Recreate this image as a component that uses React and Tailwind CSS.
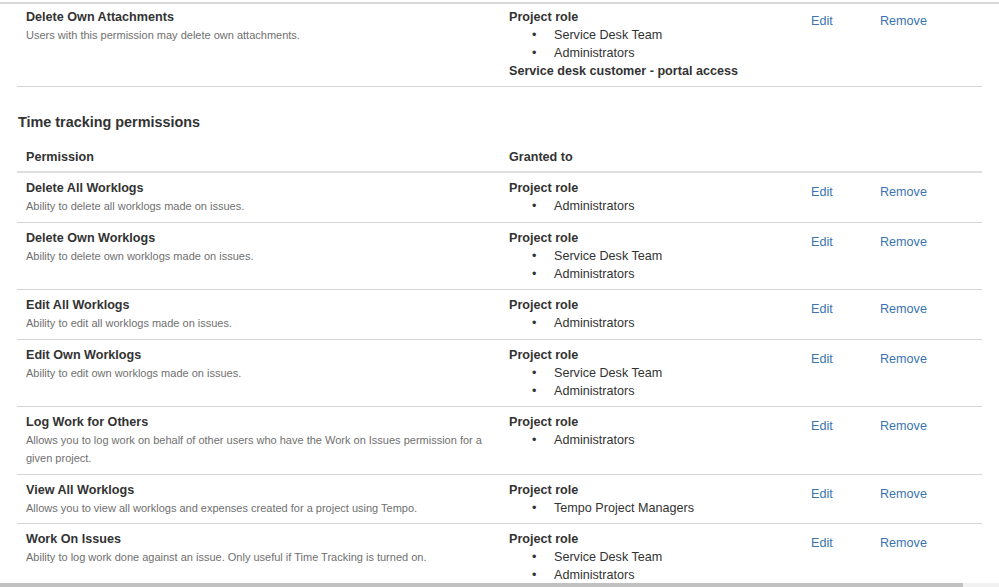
import React from 'react';

const timeRows = [
  {
    title: 'Delete All Worklogs',
    desc: 'Ability to delete all worklogs made on issues.',
    roles: ['Administrators'],
  },
  {
    title: 'Delete Own Worklogs',
    desc: 'Ability to delete own worklogs made on issues.',
    roles: ['Service Desk Team', 'Administrators'],
  },
  {
    title: 'Edit All Worklogs',
    desc: 'Ability to edit all worklogs made on issues.',
    roles: ['Administrators'],
  },
  {
    title: 'Edit Own Worklogs',
    desc: 'Ability to edit own worklogs made on issues.',
    roles: ['Service Desk Team', 'Administrators'],
  },
  {
    title: 'Log Work for Others',
    desc: 'Allows you to log work on behalf of other users who have the Work on Issues permission for a given project.',
    roles: ['Administrators'],
  },
  {
    title: 'View All Worklogs',
    desc: 'Allows you to view all worklogs and expenses created for a project using Tempo.',
    roles: ['Tempo Project Managers'],
  },
  {
    title: 'Work On Issues',
    desc: 'Ability to log work done against an issue. Only useful if Time Tracking is turned on.',
    roles: ['Service Desk Team', 'Administrators'],
  },
];

const gridCols = 'grid grid-cols-[483px_302px_69px_1fr]';

const PermissionRow = ({ title, desc, roles, extra, border = true, top = 'pt-[6px]', bottom = 'pb-[6.5px]' }) => (
  <div className={`${gridCols} ${top} ${bottom} ${border ? 'border-b border-[#d5d5d5]' : ''}`}>
    <div className="pl-[9px] pr-[9px]">
      <div className="font-bold text-[#333]">{title}</div>
      <div className="text-[11px] text-[#707070]">{desc}</div>
    </div>
    <div className="pl-[9px]">
      <div className="font-bold text-[#333]">Project role</div>
      {roles.map((role) => (
        <div key={role} className="flex text-[#333]">
          <span className="w-[45px] pl-[23px]">•</span>
          <span>{role}</span>
        </div>
      ))}
      {extra && <div className="font-bold text-[#333]">{extra}</div>}
    </div>
    <div className="pl-[9px] pt-[4px]">
      <a href="#" className="text-[#3b73af]">Edit</a>
    </div>
    <div className="pl-[9px] pt-[4px]">
      <a href="#" className="text-[#3b73af]">Remove</a>
    </div>
  </div>
);

const App = () => {
  return (
    <div className="h-[587px] w-[999px] bg-white flex flex-col overflow-hidden font-['Liberation_Sans',Arial,sans-serif] text-[12.6px] leading-[18px]">
      <div className="flex-1 overflow-hidden">
        <div className="mt-[2px] h-[2px] bg-[#d9d9d9]" />

        <div className="mx-[17px]">
          {/* Previous section, last row */}
          <PermissionRow
            title="Delete Own Attachments"
            desc="Users with this permission may delete own attachments."
            roles={['Service Desk Team', 'Administrators']}
            extra="Service desk customer - portal access"
            top="pt-[4px]"
            bottom="pb-[6px]"
          />
        </div>

        {/* Time tracking section */}
        <h3 className="mt-[25px] mb-[8px] pl-[18px] text-[14.4px] leading-[20px] font-bold text-[#333]">
          Time tracking permissions
        </h3>

        <div className="mx-[17px]">
          <div className={`${gridCols} pt-[8px] pb-[5px] border-b-2 border-[#dfdfdf] font-bold text-[#333]`}>
            <div className="pl-[9px]">Permission</div>
            <div className="pl-[9px]">Granted to</div>
            <div />
            <div />
          </div>
          {timeRows.map((row, i) => (
            <PermissionRow key={row.title} {...row} border={i < timeRows.length - 1} />
          ))}
        </div>
      </div>

      {/* horizontal scrollbar */}
      <div className="h-[4px] flex shrink-0">
        <div className="w-[963px] bg-[#c1c1c1]" />
        <div className="flex-1 bg-[#f1f1f1]" />
      </div>
    </div>
  );
};

export default App;
